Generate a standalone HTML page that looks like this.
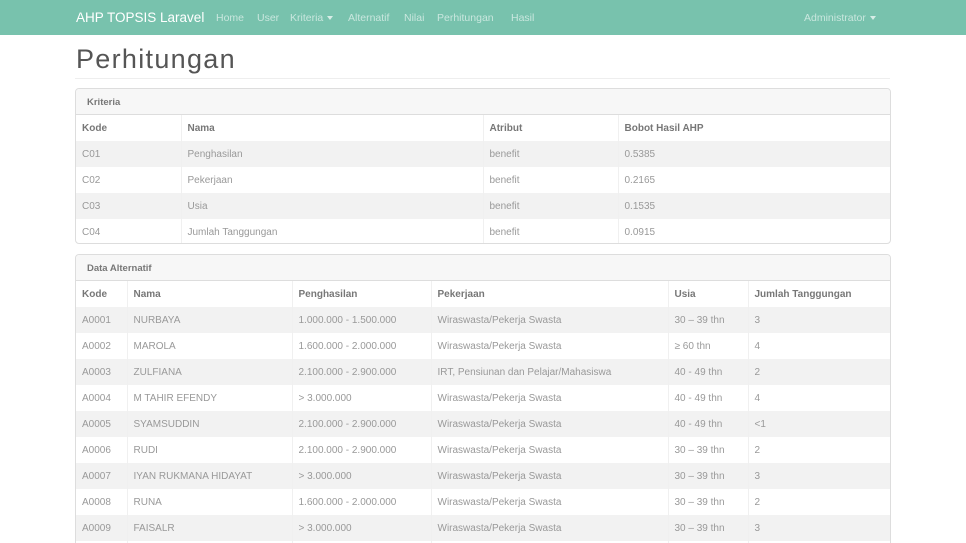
<!DOCTYPE html>
<html><head><meta charset="utf-8"><style>
*{box-sizing:border-box;margin:0;padding:0}
html,body{width:966px;height:543px;overflow:hidden}
body{background:#fff;font-family:"Liberation Sans",sans-serif;color:#999;font-size:10px;position:relative}
.nav{height:35px;background:#78c2ad;position:relative;color:rgba(255,255,255,.6);font-size:10.5px}
.nav span{position:absolute;top:12px}
.brand{color:#fff;font-size:13.5px;top:10px!important;left:76px}
.caret{display:inline-block;border-left:3px solid transparent;border-right:3px solid transparent;border-top:4px solid rgba(255,255,255,.7);vertical-align:middle;margin-left:4px}
h1{position:absolute;left:76px;top:44px;font-size:27px;font-weight:normal;color:#555;letter-spacing:1.3px}
.hr{position:absolute;left:75px;top:78px;width:815px;border-top:1px solid #eee}
.card{position:absolute;left:75px;width:816px;border:1px solid #ddd;border-radius:4px;overflow:hidden}
.ch{height:26px;background:#f7f7f7;border-bottom:1px solid #ddd;font-weight:bold;padding:8px 11px;font-size:9.5px;color:#777}
table{border-collapse:collapse;width:100%;table-layout:fixed}
td,th{height:26px;padding:0 6px;text-align:left;border-left:1px solid #f0f0f0;white-space:nowrap;overflow:hidden}
td:first-child,th:first-child{border-left:none}
th{font-weight:bold;color:#777;font-size:10px}
tbody tr:nth-child(odd){background:#f2f2f2}
</style></head><body>
<div class="nav">
<span class="brand">AHP TOPSIS Laravel</span>
<span style="left:216px">Home</span><span style="left:257px">User</span>
<span style="left:290px">Kriteria<i class="caret"></i></span>
<span style="left:348px">Alternatif</span><span style="left:404px">Nilai</span>
<span style="left:437px">Perhitungan</span><span style="left:511px">Hasil</span>
<span style="left:804px">Administrator<i class="caret"></i></span>
</div>
<h1>Perhitungan</h1>
<div class="hr"></div>
<div class="card" style="top:88px;height:156px">
<div class="ch">Kriteria</div>
<table><colgroup><col style="width:105px"><col style="width:302px"><col style="width:135px"><col></colgroup>
<thead><tr><th>Kode</th><th>Nama</th><th>Atribut</th><th>Bobot Hasil AHP</th></tr></thead>
<tbody>
<tr><td>C01</td><td>Penghasilan</td><td>benefit</td><td>0.5385</td></tr>
<tr><td>C02</td><td>Pekerjaan</td><td>benefit</td><td>0.2165</td></tr>
<tr><td>C03</td><td>Usia</td><td>benefit</td><td>0.1535</td></tr>
<tr><td>C04</td><td>Jumlah Tanggungan</td><td>benefit</td><td>0.0915</td></tr>
</tbody></table></div>
<div class="card" style="top:254px;height:300px">
<div class="ch">Data Alternatif</div>
<table><colgroup><col style="width:51px"><col style="width:165px"><col style="width:139px"><col style="width:237px"><col style="width:80px"><col></colgroup>
<thead><tr><th>Kode</th><th>Nama</th><th>Penghasilan</th><th>Pekerjaan</th><th>Usia</th><th>Jumlah Tanggungan</th></tr></thead>
<tbody>
<tr><td>A0001</td><td>NURBAYA</td><td>1.000.000 - 1.500.000</td><td>Wiraswasta/Pekerja Swasta</td><td>30 – 39 thn</td><td>3</td></tr>
<tr><td>A0002</td><td>MAROLA</td><td>1.600.000 - 2.000.000</td><td>Wiraswasta/Pekerja Swasta</td><td>≥ 60 thn</td><td>4</td></tr>
<tr><td>A0003</td><td>ZULFIANA</td><td>2.100.000 - 2.900.000</td><td>IRT, Pensiunan dan Pelajar/Mahasiswa</td><td>40 - 49 thn</td><td>2</td></tr>
<tr><td>A0004</td><td>M TAHIR EFENDY</td><td>&gt; 3.000.000</td><td>Wiraswasta/Pekerja Swasta</td><td>40 - 49 thn</td><td>4</td></tr>
<tr><td>A0005</td><td>SYAMSUDDIN</td><td>2.100.000 - 2.900.000</td><td>Wiraswasta/Pekerja Swasta</td><td>40 - 49 thn</td><td>&lt;1</td></tr>
<tr><td>A0006</td><td>RUDI</td><td>2.100.000 - 2.900.000</td><td>Wiraswasta/Pekerja Swasta</td><td>30 – 39 thn</td><td>2</td></tr>
<tr><td>A0007</td><td>IYAN RUKMANA HIDAYAT</td><td>&gt; 3.000.000</td><td>Wiraswasta/Pekerja Swasta</td><td>30 – 39 thn</td><td>3</td></tr>
<tr><td>A0008</td><td>RUNA</td><td>1.600.000 - 2.000.000</td><td>Wiraswasta/Pekerja Swasta</td><td>30 – 39 thn</td><td>2</td></tr>
<tr><td>A0009</td><td>FAISALR</td><td>&gt; 3.000.000</td><td>Wiraswasta/Pekerja Swasta</td><td>30 – 39 thn</td><td>3</td></tr>
<tr><td>&nbsp;</td><td></td><td></td><td></td><td></td><td></td></tr>
</tbody></table></div>
</body></html>
